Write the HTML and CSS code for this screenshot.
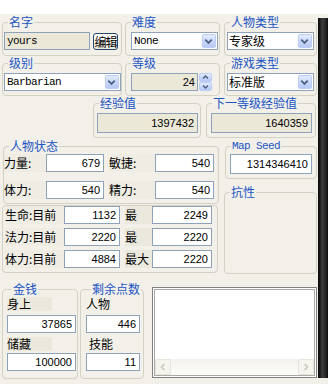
FILE: index.html
```html
<!DOCTYPE html>
<html lang="zh">
<head>
    <meta charset="UTF-8">
    <meta name="viewport" content="width=device-width, initial-scale=1.0">
    <title>人物编辑</title>
    <link rel="stylesheet" href="styles.css">
</head>
<body>
<div class="screen">
    <div class="dialog">

        <div class="row row-a">
            <fieldset class="group g-left">
                <legend>名字</legend>
                <div class="line name-line">
                    <div class="box ro mono name-box">yours</div>
                    <div class="btn">编辑</div>
                </div>
            </fieldset>
            <fieldset class="group g-mid">
                <legend>难度</legend>
                <div class="combo mono">None<span class="drop"><svg width="14" height="14" viewBox="0 0 14 14"><path d="M3.5 5.5l3.5 3.5 3.5-3.5" fill="none" stroke="#4d6185" stroke-width="2"/></svg></span></div>
            </fieldset>
            <fieldset class="group g-right">
                <legend>人物类型</legend>
                <div class="combo">专家级<span class="drop"><svg width="14" height="14" viewBox="0 0 14 14"><path d="M3.5 5.5l3.5 3.5 3.5-3.5" fill="none" stroke="#4d6185" stroke-width="2"/></svg></span></div>
            </fieldset>
        </div>

        <div class="row row-b">
            <fieldset class="group g-left">
                <legend>级别</legend>
                <div class="combo mono class-combo">Barbarian<span class="drop"><svg width="14" height="14" viewBox="0 0 14 14"><path d="M3.5 5.5l3.5 3.5 3.5-3.5" fill="none" stroke="#4d6185" stroke-width="2"/></svg></span></div>
            </fieldset>
            <fieldset class="group g-mid">
                <legend>等级</legend>
                <div class="line level-line">
                    <div class="box ro num level-box">24</div>
                    <div class="spin">
                        <span class="spin-btn"><svg width="11" height="7" viewBox="0 0 11 7"><path d="M3 4.5l2.5-2.5 2.5 2.5" fill="none" stroke="#4d6185" stroke-width="1.5"/></svg></span>
                        <span class="spin-btn"><svg width="11" height="7" viewBox="0 0 11 7"><path d="M3 2.5l2.5 2.5 2.5-2.5" fill="none" stroke="#4d6185" stroke-width="1.5"/></svg></span>
                    </div>
                </div>
            </fieldset>
            <fieldset class="group g-right">
                <legend>游戏类型</legend>
                <div class="combo">标准版<span class="drop"><svg width="14" height="14" viewBox="0 0 14 14"><path d="M3.5 5.5l3.5 3.5 3.5-3.5" fill="none" stroke="#4d6185" stroke-width="2"/></svg></span></div>
            </fieldset>
        </div>

        <div class="row row-c">
            <fieldset class="group g-exp">
                <legend>经验值</legend>
                <div class="box ro num exp-box">1397432</div>
            </fieldset>
            <fieldset class="group g-next">
                <legend>下一等级经验值</legend>
                <div class="box ro num exp-box">1640359</div>
            </fieldset>
        </div>

        <div class="row row-d">
            <div class="col-left">
                <fieldset class="group g-stats">
                    <legend>人物状态</legend>
                    <div class="stat-row">
                        <span class="lbl lbl-a">力量:</span>
                        <div class="box num box-a">679</div>
                        <span class="lbl lbl-b">敏捷:</span>
                        <div class="box num box-b">540</div>
                    </div>
                    <div class="stat-row">
                        <span class="lbl lbl-a">体力:</span>
                        <div class="box num box-a">540</div>
                        <span class="lbl lbl-b">精力:</span>
                        <div class="box num box-b">540</div>
                    </div>
                </fieldset>
                <div class="frame">
                    <div class="pool-row">
                        <span class="lbl lbl-c">生命:目前</span>
                        <div class="box num box-c">1132</div>
                        <span class="lbl lbl-d">最</span>
                        <div class="box num box-d">2249</div>
                    </div>
                    <div class="pool-row">
                        <span class="lbl lbl-c">法力:目前</span>
                        <div class="box num box-c">2220</div>
                        <span class="lbl lbl-d">最</span>
                        <div class="box num box-d">2220</div>
                    </div>
                    <div class="pool-row">
                        <span class="lbl lbl-c">体力:目前</span>
                        <div class="box num box-c">4884</div>
                        <span class="lbl lbl-d">最大</span>
                        <div class="box num box-d">2220</div>
                    </div>
                </div>
            </div>
            <div class="col-right">
                <fieldset class="group g-seed">
                    <legend class="mono">Map Seed</legend>
                    <div class="box num seed-box">1314346410</div>
                </fieldset>
                <fieldset class="group g-resist">
                    <legend>抗性</legend>
                </fieldset>
            </div>
        </div>

        <div class="row row-e">
            <fieldset class="group g-money">
                <legend>金钱</legend>
                <div class="pt-lbl"><span class="lbl">身上</span></div>
                <div class="box num pt-box money-box">37865</div>
                <div class="pt-lbl second"><span class="lbl">储藏</span></div>
                <div class="box num pt-box money-box">100000</div>
            </fieldset>
            <fieldset class="group g-points">
                <legend>剩余点数</legend>
                <div class="pt-lbl"><span class="lbl">人物</span></div>
                <div class="box num pt-box point-box">446</div>
                <div class="pt-lbl second skill"><span class="lbl">技能</span></div>
                <div class="box num pt-box point-box">11</div>
            </fieldset>
            <div class="list">
                <div class="list-inner">
                    <div class="hscroll">
                        <span class="sbtn"><svg width="14" height="14" viewBox="0 0 14 14"><path d="M8.5 4l-3 3 3 3" fill="none" stroke="#c9c7ba" stroke-width="1.6"/></svg></span>
                        <span class="track"></span>
                        <span class="sbtn"><svg width="14" height="14" viewBox="0 0 14 14"><path d="M5.5 4l3 3-3 3" fill="none" stroke="#c9c7ba" stroke-width="1.6"/></svg></span>
                    </div>
                </div>
            </div>
        </div>

    </div>
    <div class="edge"></div>
</div>
</body>
</html>
```

FILE: styles.css
```css
body {
    margin: 0;
    background-color: #fff;
    font-family: "Noto Sans CJK SC", sans-serif;
    font-size: 12px;
    line-height: 14px;
    color: #000;
    overflow: hidden;
}
.screen {
    display: flex;
    margin-top: 14px;
    height: 370px;
    background-color: #f2f0e9;
}
.dialog {
    width: 318px;
}
.edge {
    width: 10px;
    height: 360px;
    margin-top: 4px;
    background: linear-gradient(to right, #060606 0, #1c1c1c 2px, #3e3e3e 4px, #2c2c2c 7px, #0e0e0e 10px);
}

/* rows */
.row {
    display: flex;
    align-items: flex-start;
}
.row-a {
    margin-top: 2px;
    padding-left: 2px;
}
.row-b {
    margin-top: 1px;
    padding-left: 2px;
}
.row-c {
    margin-top: 1px;
    padding-left: 93px;
}
.row-d {
    margin-top: 2px;
    padding-left: 2px;
}
.row-e {
    margin-top: 9px;
    padding-left: 2px;
}

/* group boxes */
.group {
    box-sizing: border-box;
    margin: 0;
    padding: 4px 0 0 0;
    border: 1px solid #d3d1c3;
    border-radius: 4px;
    min-width: 0;
}
.group legend {
    margin-left: 5px;
    padding: 0 1px;
    font-size: 12px;
    line-height: 12px;
    color: #2154c4;
}
.group legend.mono {
    font-family: "Liberation Mono", monospace;
    font-size: 11px;
    letter-spacing: -0.6px;
}
.row-a .group {
    height: 40px;
}
.row-b .group {
    height: 39px;
}
.g-left {
    width: 120px;
}
.g-mid {
    width: 95px;
    margin-left: 3px;
}
.g-right {
    width: 93px;
    margin-left: 4px;
}

/* basic controls */
.line {
    display: flex;
}
.box {
    box-sizing: border-box;
    height: 18px;
    border: 1px solid #8ea3bb;
    background-color: #fff;
    line-height: 16px;
    white-space: nowrap;
    overflow: hidden;
}
.box.ro {
    background-color: #ebe8d8;
}
.num {
    font-family: "Liberation Sans", sans-serif;
    font-size: 11px;
    text-align: right;
    padding-right: 3px;
}
.mono {
    font-family: "Liberation Mono", monospace;
    font-size: 11px;
    letter-spacing: -0.6px;
}
.name-line {
    padding-left: 1px;
}
.name-box {
    width: 86px;
    padding-left: 2px;
}
.btn {
    box-sizing: border-box;
    width: 25px;
    height: 17px;
    margin: 1px 0 0 3px;
    border: 1px solid #26466e;
    border-radius: 3px;
    background: linear-gradient(#fdfdfb, #ece9dd);
    font-size: 12px;
    line-height: 15px;
    text-align: center;
    letter-spacing: -1px;
}
.combo {
    box-sizing: border-box;
    display: flex;
    justify-content: space-between;
    align-items: center;
    width: 87px;
    height: 18px;
    padding-left: 2px;
    border: 1px solid #8ea3bb;
    background-color: #fff;
    line-height: 16px;
}
.g-mid .combo {
    margin-left: 5px;
}
.g-right .combo {
    margin-left: 2px;
    padding-left: 1px;
}
.class-combo {
    width: 117px;
    margin-left: 1px;
}
.drop {
    display: flex;
    box-sizing: border-box;
    width: 14px;
    height: 14px;
    margin-right: 1px;
    border: 1px solid #bccdf5;
    border-radius: 2px;
    background: linear-gradient(#e2ebfe, #b5c9f5);
}
.drop svg {
    margin: -1px 0 0 -1px;
}
.level-line {
    margin-left: 5px;
}
.level-box {
    width: 67px;
    padding-right: 2px;
}
.spin {
    display: flex;
    flex-direction: column;
    width: 13px;
    height: 18px;
    margin-left: 1px;
}
.spin-btn {
    display: flex;
    justify-content: center;
    align-items: center;
    box-sizing: border-box;
    height: 9px;
    border: 1px solid #bccdf5;
    border-radius: 2px;
    background: linear-gradient(#e2ebfe, #b5c9f5);
}

/* experience */
.g-exp {
    width: 108px;
    height: 41px;
}
.g-next {
    width: 110px;
    height: 41px;
    margin-left: 5px;
}
.exp-box {
    width: 101px;
    height: 20px;
    line-height: 18px;
}
.g-exp .exp-box {
    margin-left: 3px;
}
.g-next .exp-box {
    margin-left: 4px;
}

/* character stats */
.col-left {
    width: 217px;
}
.g-stats {
    width: 216px;
    height: 64px;
    margin-left: 1px;
    padding-top: 2px;
}
.stat-row,
.pool-row {
    display: flex;
    height: 18px;
}
.stat-row + .stat-row {
    margin-top: 9px;
}
.lbl {
    background-color: #eeece3;
    line-height: 18px;
    white-space: nowrap;
}
.lbl-a {
    width: 42px;
}
.box-a {
    width: 58px;
}
.lbl-b {
    width: 46px;
    margin-left: 5px;
}
.box-b {
    width: 59px;
}
.frame {
    box-sizing: border-box;
    width: 216px;
    height: 68px;
    margin-top: 1px;
    border: 1px solid #d3d1c3;
    border-radius: 4px;
}
.pool-row + .pool-row {
    margin-top: 4px;
}
.lbl-c {
    width: 59px;
    margin-left: 2px;
}
.box-c {
    width: 56px;
}
.lbl-d {
    width: 27px;
    margin-left: 5px;
    background-color: #ebe9de;
}
.box-d {
    width: 60px;
}

/* right column */
.col-right {
    margin-left: 5px;
}
.g-seed {
    width: 92px;
    height: 39px;
    margin-left: 1px;
    padding-top: 2px;
}
.seed-box {
    width: 82px;
    height: 20px;
    margin-left: 4px;
    line-height: 18px;
}
.g-resist {
    width: 93px;
    height: 88px;
    margin-top: 7px;
}

/* money and points */
.row-e .group {
    height: 96px;
    padding: 2px 0 0 4px;
}
.g-money {
    width: 76px;
}
.g-points {
    width: 64px;
    margin-left: 2px;
}
.row-e .g-points {
    padding-left: 5px;
}
.pt-lbl {
    height: 18px;
}
.pt-lbl .lbl {
    display: inline-block;
    width: 45px;
    line-height: 14px;
    background-color: #ebe9de;
}
.g-points .pt-lbl .lbl {
    background-color: transparent;
}
.pt-lbl.second {
    height: 16px;
    padding-top: 4px;
}
.pt-lbl.skill {
    padding-left: 3px;
}
.money-box {
    width: 69px;
}
.point-box {
    width: 54px;
}

/* list */
.list {
    box-sizing: border-box;
    width: 165px;
    height: 91px;
    margin: 4px 0 0 8px;
    padding: 1px;
    border: 1px solid #808080;
    background-color: #fff;
}
.list-inner {
    box-sizing: border-box;
    display: flex;
    flex-direction: column;
    justify-content: flex-end;
    height: 100%;
    border: 1px solid #aaa9a4;
}
.hscroll {
    display: flex;
    height: 16px;
    background: linear-gradient(#f3f2ec, #fcfcf9);
}
.sbtn {
    display: flex;
    box-sizing: border-box;
    width: 16px;
    height: 16px;
    border: 1px solid #e6e5dd;
    border-radius: 2px;
    background-color: #f5f4ef;
}
.track {
    flex: 1;
}
```
